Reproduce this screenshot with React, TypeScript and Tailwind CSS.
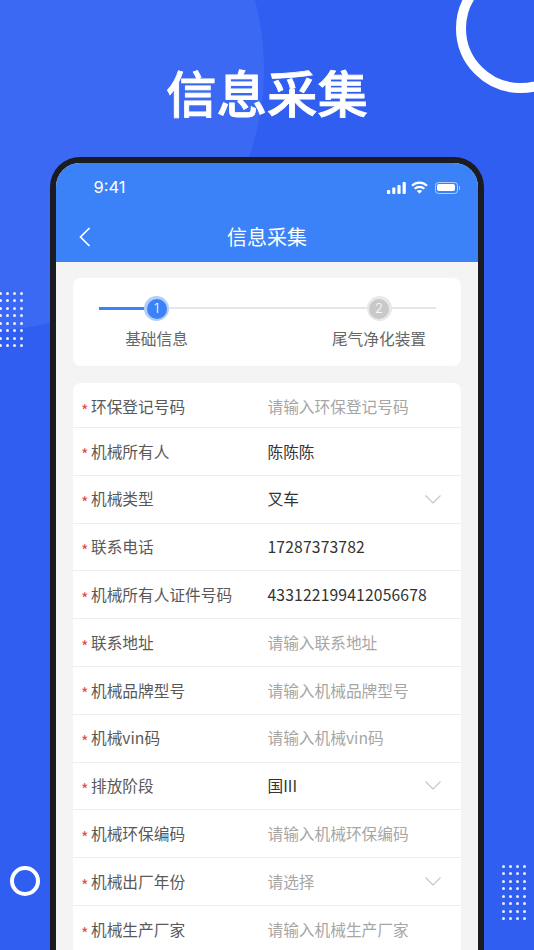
// Form rows shown inside the phone mockup
type Row = {
  label: string;
  value: string;
  filled?: boolean;
  select?: boolean;
  digits?: boolean;
};

const ROWS: Row[] = [
  { label: '环保登记号码', value: '请输入环保登记号码' },
  { label: '机械所有人', value: '陈陈陈', filled: true },
  { label: '机械类型', value: '叉车', filled: true, select: true },
  { label: '联系电话', value: '17287373782', filled: true, digits: true },
  { label: '机械所有人证件号码', value: '433122199412056678', filled: true, digits: true },
  { label: '联系地址', value: '请输入联系地址' },
  { label: '机械品牌型号', value: '请输入机械品牌型号' },
  { label: '机械vin码', value: '请输入机械vin码' },
  { label: '排放阶段', value: '国III', filled: true, select: true },
  { label: '机械环保编码', value: '请输入机械环保编码' },
  { label: '机械出厂年份', value: '请选择', select: true },
  { label: '机械生产厂家', value: '请输入机械生产厂家' },
];

const DOTS = Array.from({ length: 32 });

function DotGrid({ className }: { className: string }) {
  return (
    <div className={`absolute grid grid-cols-4 gap-x-[4.4px] gap-y-[4.9px] ${className}`}>
      {DOTS.map((_, i) => (
        <span key={i} className="size-[2.6px] rounded-full bg-white/90" />
      ))}
    </div>
  );
}

function StatusIcons() {
  return (
    <div className="flex items-center">
      <svg width="19" height="12" viewBox="0 0 19 12" fill="white">
        <rect x="0" y="8" width="3.2" height="4" rx="1" />
        <rect x="5.2" y="5.5" width="3.2" height="6.5" rx="1" />
        <rect x="10.4" y="3" width="3.2" height="9" rx="1" />
        <rect x="15.6" y="0" width="3.2" height="12" rx="1" />
      </svg>
      <svg className="ml-[5px]" width="17" height="13" viewBox="0 0 17 13" fill="none" stroke="white" strokeWidth="2.2">
        <path d="M1 4.8C5.3 0.6 11.7 0.6 16 4.8" />
        <path d="M3.7 7.7C6.4 5.2 10.6 5.2 13.3 7.7" />
        <path d="M8.5 12.8L5.8 10C7.3 8.8 9.7 8.8 11.2 10Z" fill="white" stroke="none" />
      </svg>
      <div className="ml-[7px] flex items-center">
        <div className="h-[12px] w-[23px] rounded-[3.5px] border border-white/60 p-[1.5px]">
          <div className="size-full rounded-[2px] bg-white" />
        </div>
        <div className="ml-[1.5px] h-[4px] w-[1px] bg-white/50" />
      </div>
    </div>
  );
}

function Step({ n, label, active }: { n: number; label: string; active?: boolean }) {
  return (
    <div className="flex w-[96px] flex-col items-center">
      <div
        className={`z-10 flex size-[25px] items-center justify-center rounded-full ${
          active ? 'bg-[#b3cdfa]' : 'bg-[#e8e8e8]'
        }`}
      >
        <div
          className={`flex size-[20px] items-center justify-center rounded-full font-['Inter',sans-serif] text-[13px] font-light text-white ${
            active ? 'bg-[#3b82f8]' : 'bg-[#c9c9c9]'
          }`}
        >
          {n}
        </div>
      </div>
      <div className="mt-[7px] text-[15.7px] leading-[22px] whitespace-nowrap text-[#666666]">{label}</div>
    </div>
  );
}

export default function App() {
  return (
    <div className="relative h-[950px] w-[534px] overflow-hidden bg-[#2f5ef0] font-['Noto_Sans_CJK_SC','Noto_Sans',sans-serif]">
      {/* background decoration */}
      <svg className="absolute top-0 left-0" width="534" height="950" viewBox="0 0 534 950">
        <path d="M0 0H255C268 50 268 105 248 160L50 323C32 327 15 329 0 330Z" fill="#3b69f3" />
      </svg>
      <div className="absolute -top-[36px] left-[456px] size-[129px] rounded-full border-[10px] border-white" />
      <div className="absolute top-[866px] left-[10px] size-[30px] rounded-full border-[4.5px] border-white" />
      <DotGrid className="top-[292px] -left-[1px]" />
      <DotGrid className="top-[865px] left-[502px]" />

      {/* title */}
      <div className="relative flex h-[157px] items-center justify-center pt-[27px] text-[50.5px] font-medium text-white [-webkit-text-stroke:0.8px_white]">
        信息采集
      </div>

      {/* phone mockup */}
      <div className="relative mx-[50px] rounded-t-[30px] border-x-[6px] border-t-[6px] border-[#1b1c22] bg-[#f4f4f4]">
        <div className="rounded-t-[24px] bg-[#3b82f8] text-white">
          <div className="flex h-[48px] items-center justify-between pt-[1px] pr-[18px] pl-[37.5px]">
            <span className="font-['Inter',sans-serif] text-[16.5px]">9:41</span>
            <StatusIcons />
          </div>
          <div className="relative flex h-[51px] items-center justify-center text-[20px]">
            <svg
              className="absolute left-[23px]"
              width="12"
              height="20"
              viewBox="0 0 12 20"
              fill="none"
              stroke="white"
              strokeWidth="1.7"
            >
              <path d="M10.5 1L1.5 10L10.5 19" />
            </svg>
            信息采集
          </div>
        </div>

        <div className="px-[17px] pt-[16px]">
          {/* steps */}
          <div className="relative h-[88px] rounded-[8px] bg-white pt-[18px] pr-[34px] pl-[35.5px]">
            <div className="absolute top-[29px] right-[25px] left-[26px] h-[2px] bg-[#e6e6e6]" />
            <div className="absolute top-[29px] left-[26px] h-[2.5px] w-[50px] bg-[#3b82f8]" />
            <div className="flex justify-between">
              <Step n={1} label="基础信息" active />
              <Step n={2} label="尾气净化装置" />
            </div>
          </div>

          {/* form */}
          <div className="mt-[17px] rounded-t-[8px] bg-white">
            {ROWS.map((row, i) => (
              <div
                key={row.label}
                className={`flex items-center pr-[20px] pl-[8px] text-[15.7px] ${
                  i === 0 ? 'h-[45px] pt-[3px]' : 'h-[47.8px]'
                } ${i < ROWS.length - 1 ? 'border-b border-[#eeeeee]' : ''}`}
              >
                <span className="w-[10px] translate-y-[3px] text-[16px] text-[#e04a4a]">*</span>
                <span className="w-[176.5px] whitespace-nowrap text-[#595959]">{row.label}</span>
                <span
                  className={`flex-1 whitespace-nowrap ${row.digits ? 'tracking-[0.15px]' : ''} ${
                    row.filled ? 'text-[#333333]' : 'text-[#a6a6a6]'
                  }`}
                >
                  {row.value}
                </span>
                {row.select && (
                  <svg width="16" height="9" viewBox="0 0 16 9" fill="none" stroke="#c4c4c4" strokeWidth="1.1">
                    <path d="M0.5 0.5L8 8L15.5 0.5" />
                  </svg>
                )}
              </div>
            ))}
          </div>
        </div>
      </div>
    </div>
  );
}
